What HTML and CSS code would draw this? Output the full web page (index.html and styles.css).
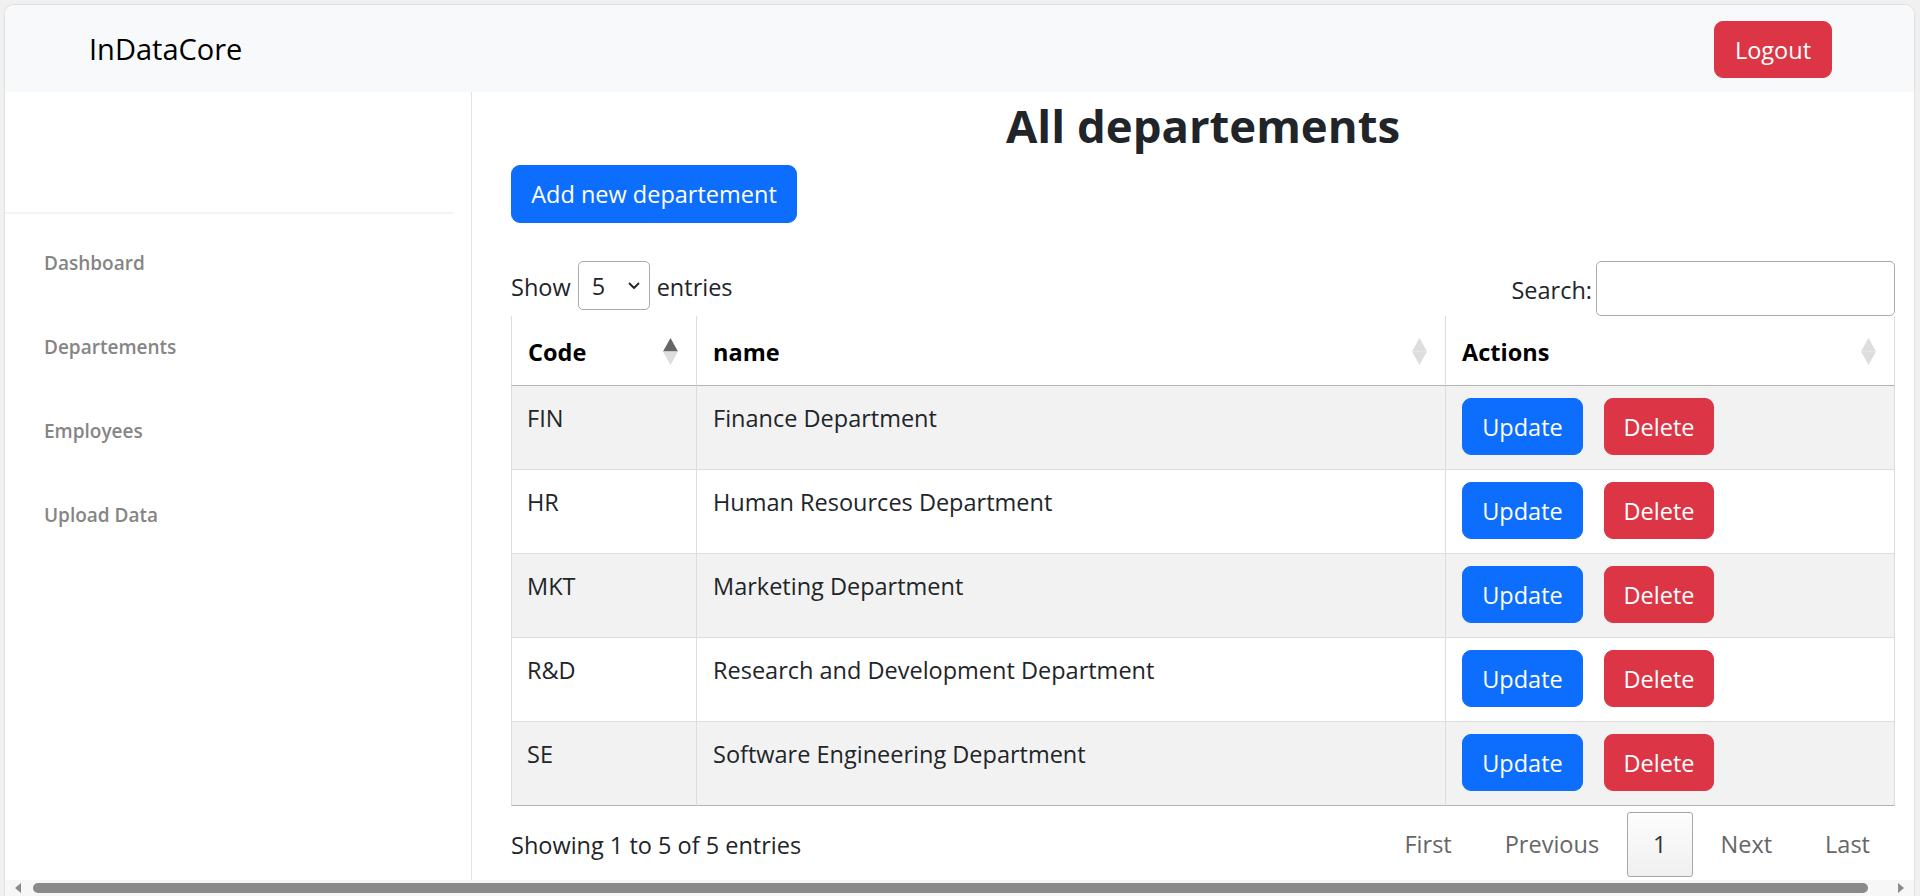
FILE: index.html
```html
<!DOCTYPE html>
<html lang="en">
<head>
<meta charset="utf-8">
<title>InDataCore - All departements</title>
<link rel="stylesheet" href="styles.css">
</head>
<body>
<div class="window">
  <nav class="navbar">
    <a class="brand" href="#">InDataCore</a>
    <button class="btn btn-danger btn-logout">Logout</button>
  </nav>
  <div class="layout">
    <aside class="sidebar">
      <div class="sidebar-top"></div>
      <ul class="side-nav">
        <li><a href="#">Dashboard</a></li>
        <li><a href="#">Departements</a></li>
        <li><a href="#">Employees</a></li>
        <li><a href="#">Upload Data</a></li>
      </ul>
    </aside>
    <main class="main">
      <h1 class="title">All departements</h1>
      <button class="btn btn-primary btn-add">Add new departement</button>
      <div class="dt-wrapper">
        <div class="dt-top">
          <div class="dt-length">
            <span>Show</span>
            <span class="select"><span>5</span>
              <svg class="chev" width="12" height="8" viewBox="0 0 12 8"><path d="M1.5 1.5 L6 6 L10.5 1.5" fill="none" stroke="#222" stroke-width="1.8" stroke-linecap="round" stroke-linejoin="round"/></svg>
            </span>
            <span>entries</span>
          </div>
          <div class="dt-search">
            <label for="q">Search:</label>
            <input id="q" class="search-input" type="search">
          </div>
        </div>
        <table class="dt-table">
          <thead>
            <tr>
              <th class="c-code"><div class="th-inner"><span>Code</span>
                <svg class="sort" width="15" height="27" viewBox="0 0 15 27"><path d="M0 13.5 L7.5 0 L15 13.5 Z" fill="#666"/><path d="M0 13.5 L7.5 27 L15 13.5 Z" fill="#ddd"/></svg></div></th>
              <th class="c-name"><div class="th-inner"><span>name</span>
                <svg class="sort" width="15" height="27" viewBox="0 0 15 27"><path d="M0 13.5 L7.5 0 L15 13.5 Z" fill="#ddd"/><path d="M0 13.5 L7.5 27 L15 13.5 Z" fill="#ddd"/></svg></div></th>
              <th class="c-act"><div class="th-inner"><span>Actions</span>
                <svg class="sort" width="15" height="27" viewBox="0 0 15 27"><path d="M0 13.5 L7.5 0 L15 13.5 Z" fill="#ddd"/><path d="M0 13.5 L7.5 27 L15 13.5 Z" fill="#ddd"/></svg></div></th>
            </tr>
          </thead>
          <tbody>
            <tr class="odd"><td class="t">FIN</td><td class="t">Finance Department</td><td class="a"><div class="acts"><button class="btn btn-primary btn-upd">Update</button><button class="btn btn-danger btn-del">Delete</button></div></td></tr>
            <tr class="even"><td class="t">HR</td><td class="t">Human Resources Department</td><td class="a"><div class="acts"><button class="btn btn-primary btn-upd">Update</button><button class="btn btn-danger btn-del">Delete</button></div></td></tr>
            <tr class="odd"><td class="t">MKT</td><td class="t">Marketing Department</td><td class="a"><div class="acts"><button class="btn btn-primary btn-upd">Update</button><button class="btn btn-danger btn-del">Delete</button></div></td></tr>
            <tr class="even"><td class="t">R&amp;D</td><td class="t">Research and Development Department</td><td class="a"><div class="acts"><button class="btn btn-primary btn-upd">Update</button><button class="btn btn-danger btn-del">Delete</button></div></td></tr>
            <tr class="odd last"><td class="t">SE</td><td class="t">Software Engineering Department</td><td class="a"><div class="acts"><button class="btn btn-primary btn-upd">Update</button><button class="btn btn-danger btn-del">Delete</button></div></td></tr>
          </tbody>
        </table>
        <div class="dt-bottom">
          <div class="dt-info">Showing 1 to 5 of 5 entries</div>
          <div class="dt-paginate">
            <a class="pg disabled">First</a>
            <a class="pg disabled">Previous</a>
            <a class="pg current">1</a>
            <a class="pg disabled">Next</a>
            <a class="pg disabled">Last</a>
          </div>
        </div>
      </div>
    </main>
  </div>
  <div class="hscroll">
    <svg class="arrow" width="6" height="10" viewBox="0 0 6 10"><path d="M6 0 L0 5 L6 10 Z" fill="#8a8a8a"/></svg>
    <div class="thumb"></div>
    <svg class="arrow" width="6" height="10" viewBox="0 0 6 10"><path d="M0 0 L6 5 L0 10 Z" fill="#8a8a8a"/></svg>
  </div>
</div>
</body>
</html>
```

FILE: styles.css
```css
* { box-sizing: border-box; }

html, body {
  margin: 0;
  padding: 0;
  height: 100%;
  overflow: hidden;
}

body {
  background: #f0f0f0;
  font-family: "Open Sans", "Noto Sans", Arial, sans-serif;
  font-size: 23.5px;
  line-height: 36px;
  color: #212529;
}

.window {
  margin: 4px 5px 0 4px;
  height: 892px;
  background: #fff;
  border: 1px solid #e0e0e0;
  border-bottom: none;
  border-radius: 10px 10px 0 0;
  overflow: hidden;
  display: flex;
  flex-direction: column;
}

/* ---------- navbar ---------- */
.navbar {
  flex: 0 0 87px;
  background: #f8f9fa;
  display: flex;
  align-items: center;
  justify-content: space-between;
  padding: 0 82px 0 84px;
}

.brand {
  font-size: 29px;
  line-height: 40px;
  color: #000;
  text-decoration: none;
}

/* ---------- buttons ---------- */
.btn {
  font-family: inherit;
  font-size: 23.5px;
  line-height: 36px;
  padding: 9px 0;
  border: 1px solid transparent;
  border-radius: 9px;
  color: #fff;
  text-align: center;
  cursor: pointer;
}

.btn-primary { background: #0d6efd; border-color: #0d6efd; }
.btn-danger  { background: #dc3545; border-color: #dc3545; }

.btn-logout { width: 118px; height: 57px; margin-top: 2px; }
.btn-add    { width: 286px; height: 58px; margin-top: 7px; }
.btn-upd    { width: 121px; height: 57px; }
.btn-del    { width: 110px; height: 57px; }

/* ---------- layout ---------- */
.layout {
  flex: 1 1 auto;
  display: flex;
  min-height: 0;
}

.sidebar {
  flex: 0 0 467px;
  border-right: 1px solid #e3e3e3;
}

.sidebar-top {
  height: 122px;
  margin-right: 18px;
  border-bottom: 2px solid #f3f3f3;
}

.side-nav {
  list-style: none;
  margin: 0;
  padding: 7px 0 0 0;
}

.side-nav li {
  height: 84px;
  display: flex;
  align-items: center;
  padding-left: 39px;
}

.side-nav a {
  font-size: 19px;
  font-weight: 600;
  color: #858585;
  text-decoration: none;
}

.main {
  flex: 1 1 auto;
  padding: 0 18px 0 39px;
  display: flex;
  flex-direction: column;
  align-items: flex-start;
}

.title {
  margin: 0;
  font-size: 45.5px;
  line-height: 66px;
  font-weight: 700;
  text-align: center;
  color: #212529;
  width: 1384px;
}

/* ---------- datatable ---------- */
.dt-wrapper {
  width: 1384px;
  margin-top: 38px;
}

.dt-top {
  display: flex;
  justify-content: space-between;
  align-items: flex-start;
  height: 55px;
}

.dt-length {
  display: flex;
  align-items: center;
  gap: 7px;
  height: 49px;
  padding-top: 3px;
}

.select {
  width: 72px;
  height: 49px;
  border: 1px solid #aaa;
  border-radius: 5px;
  display: flex;
  align-items: center;
  justify-content: space-between;
  padding: 0 9px 0 13px;
  margin-top: -3px;
  background: #fff;
}

.dt-search {
  display: flex;
  align-items: center;
  gap: 4px;
  height: 55px;
  padding-top: 2px;
}

.search-input {
  width: 299px;
  height: 55px;
  margin-top: -2px;
  border: 1px solid #aaa;
  border-radius: 5px;
  background: #fff;
  font: inherit;
  padding: 0 8px;
  outline: none;
}

.dt-table {
  width: 1384px;
  table-layout: fixed;
  border-collapse: separate;
  border-spacing: 0;
}

.dt-table th {
  text-align: left;
  font-weight: 700;
  color: #000;
  padding: 18px 18px 14px 16px;
  line-height: 37px;
  border-bottom: 1px solid #b3b3b3;
  border-right: 1px solid #ddd;
  background: #fff;
}

.dt-table th:first-child,
.dt-table td:first-child {
  border-left: 1px solid #ddd;
}

.c-code { width: 186px; }
.c-name { width: 749px; }
.c-act  { width: 449px; }

.th-inner {
  display: flex;
  justify-content: space-between;
  align-items: center;
}

.sort { display: block; margin-top: -3px; }

.dt-table td {
  vertical-align: top;
  border-right: 1px solid #ddd;
  border-bottom: 1px solid #ddd;
  padding: 14px 15px 0 16px;
}

.dt-table td:first-child {
  padding-left: 15px;
}

.dt-table td.a {
  padding: 12px 15px 14px 16px;
}

.dt-table tr.odd td { background: #f2f2f2; }
.dt-table tr.last td { border-bottom-color: #b3b3b3; }

.acts {
  display: flex;
  gap: 21px;
}

.dt-bottom {
  display: flex;
  justify-content: space-between;
  align-items: flex-start;
}

.dt-info {
  padding-top: 21px;
}

.dt-paginate {
  display: flex;
  padding-top: 6px;
}

.pg {
  display: block;
  margin-left: 3px;
  padding: 12px 24px;
  line-height: 39px;
  border: 1px solid transparent;
  border-radius: 3px;
  color: #666;
  text-decoration: none;
}

.pg.current {
  color: #333;
  border-color: #a6a6a6;
  background: linear-gradient(to bottom, #fdfdfd 0%, #f0f0f0 100%);
  padding: 12px 25px;
}

/* ---------- horizontal scrollbar ---------- */
.hscroll {
  flex: 0 0 16px;
  background: #f7f7f7;
  display: flex;
  align-items: center;
  padding: 0 0 0 10px;
}

.hscroll .arrow { display: block; flex: none; }

.thumb {
  width: 1835px;
  height: 10px;
  margin: 0 30px 0 12px;
  background: #8a8a8a;
  border-radius: 5px;
}
```
